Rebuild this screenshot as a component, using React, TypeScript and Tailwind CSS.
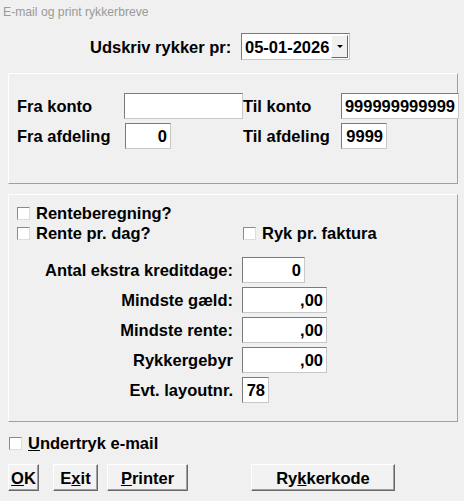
import React from 'react';

const font = "font-['Liberation_Sans',Arial,sans-serif]";
const txt = 'text-[16.5px] font-bold leading-[20px]';
const field = `flex h-[26px] items-center justify-end border border-[#7a7a7a] border-r-[#c8c8c8] border-b-[#c8c8c8] bg-white pr-[3px] ${txt}`;
const btn = `flex h-[27px] items-center justify-center border border-t-white border-l-white border-r-[#696969] border-b-[#696969] bg-[#f2f2f2] shadow-[inset_-1px_-1px_0_#a0a0a0] ${txt}`;

function Check({ label }: { label: React.ReactNode }) {
  return (
    <div className="flex h-[20px] items-center gap-[6px]">
      <span className="h-[13px] w-[13px] border border-[#8a8a8a] border-r-[#dcdcdc] border-b-[#dcdcdc] bg-white" />
      <span className={txt}>{label}</span>
    </div>
  );
}

export default function App() {
  const amounts = [
    { label: 'Antal ekstra kreditdage:', value: '0', w: 'w-[63px]' },
    { label: 'Mindste gæld:', value: ',00', w: 'w-[85px]' },
    { label: 'Mindste rente:', value: ',00', w: 'w-[85px]' },
    { label: 'Rykkergebyr', value: ',00', w: 'w-[85px]' },
    { label: 'Evt. layoutnr.', value: '78', w: 'w-[27px]' },
  ];

  return (
    <div className={`h-[501px] w-[464px] overflow-hidden bg-[#f0f0f0] text-black ${font}`}>
      <div className="flex h-[24px] items-center pl-[3px] text-[12.2px] text-[#9a9a9a]">E-mail og print rykkerbreve</div>

      <div className="mt-[9px] flex items-center pl-[90px]">
        <span className={`w-[151px] ${txt}`}>Udskriv rykker pr:</span>
        <div className="flex h-[27px] w-[109px] items-center border border-[#7a7a7a] border-r-[#c8c8c8] border-b-[#c8c8c8] bg-white">
          <span className={`flex-1 pl-[3px] ${txt}`}>05-01-2026</span>
          <span className="mr-[1px] flex h-[23px] w-[17px] items-center justify-center border border-t-white border-l-white border-r-[#696969] border-b-[#696969] bg-[#f0f0f0]">
            <span className="h-0 w-0 border-x-[3px] border-t-[3px] border-x-transparent border-t-black" />
          </span>
        </div>
      </div>

      <div className="ml-[8px] mt-[13px] h-[111px] w-[450px] border border-t-white border-l-white border-r-[#a0a0a0] border-b-[#a0a0a0] pl-[8px] pt-[19px]">
        <div className="grid grid-cols-[107px_119px_98px_118px] grid-rows-[26px_26px] items-center gap-y-[4px]">
          <span className={txt}>Fra konto</span>
          <div className={`${field} w-[119px]`} />
          <span className={txt}>Til konto</span>
          <div className={`${field} w-[118px]`}>999999999999</div>
          <span className={txt}>Fra afdeling</span>
          <div className={`${field} ml-[1px] w-[46px]`}>0</div>
          <span className={txt}>Til afdeling</span>
          <div className={`${field} w-[46px]`}>9999</div>
        </div>
      </div>

      <div className="ml-[8px] mt-[10px] h-[228px] w-[450px] border border-t-white border-l-white border-r-[#a0a0a0] border-b-[#a0a0a0] pl-[8px] pt-[8px]">
        <Check label="Renteberegning?" />
        <div className="flex">
          <div className="w-[226px]">
            <Check label="Rente pr. dag?" />
          </div>
          <Check label="Ryk pr. faktura" />
        </div>
        <div className="mt-[14px] flex flex-col gap-[4px]">
          {amounts.map((a) => (
            <div key={a.label} className="flex h-[26px] items-center">
              <span className={`w-[225px] pr-[9px] text-right ${txt}`}>{a.label}</span>
              <div className={`${field} ${a.w}`}>{a.value}</div>
            </div>
          ))}
        </div>
      </div>

      <div className="ml-[9px] mt-[11px]">
        <Check label={<><u>U</u>ndertryk e-mail</>} />
      </div>

      <div className="ml-[8px] mt-[11px] flex">
        <button className={`${btn} w-[31px]`}><u>O</u>K</button>
        <button className={`${btn} ml-[14px] w-[45px]`}>E<u>x</u>it</button>
        <button className={`${btn} ml-[9px] w-[81px]`}><u>P</u>rinter</button>
        <button className={`${btn} ml-[63px] w-[144px]`}>Ry<u>k</u>kerkode</button>
      </div>
    </div>
  );
}
